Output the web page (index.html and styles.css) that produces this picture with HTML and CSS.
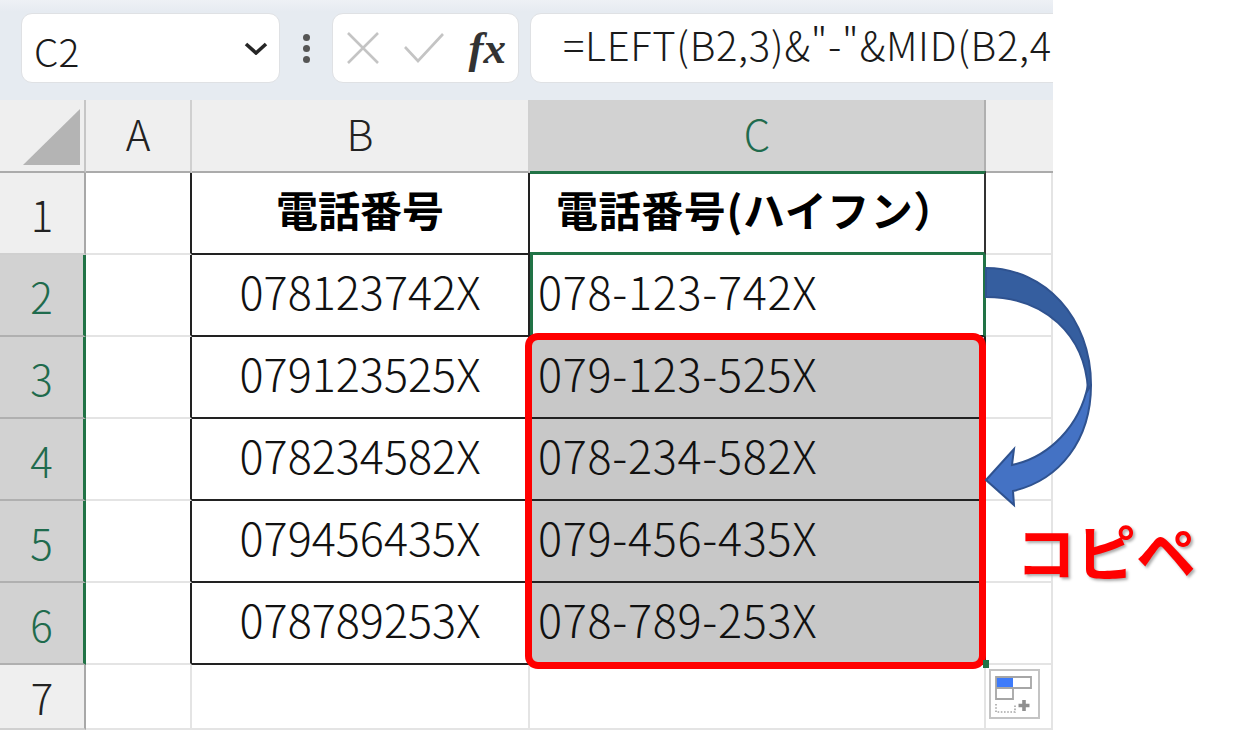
FILE: index.html
```html
<!DOCTYPE html>
<html lang="ja">
<head>
<meta charset="utf-8">
<title>Excel</title>
<link rel="stylesheet" href="styles.css">
</head>
<body>
<div class="stage">
  <div class="sheet">
    <div class="toolbar">
      <div class="box namebox">
        <span>C2</span>
        <svg class="chev" width="24" height="14" viewBox="0 0 24 14"><path d="M2 3l10 9 10-9" fill="none" stroke="#262626" stroke-width="3.6"/></svg>
      </div>
      <div class="dots"><i></i><i></i><i></i></div>
      <div class="box fxbox">
        <svg width="34" height="34" viewBox="0 0 34 34"><path d="M2 2l30 30M32 2L2 32" fill="none" stroke="#c4c4c4" stroke-width="2.6"/></svg>
        <svg width="42" height="32" viewBox="0 0 42 32"><path d="M2 15l13 14L40 2" fill="none" stroke="#c4c4c4" stroke-width="2.6"/></svg>
        <span class="fx">fx</span>
      </div>
      <div class="box formula">=LEFT(B2,3)&amp;"-"&amp;MID(B2,4</div>
    </div>
    <div class="grid">
      <div class="corner"><svg width="86" height="72" viewBox="0 0 86 72"><path d="M80 9v56H23z" fill="#b4b4b4"/></svg></div>
      <div class="ch"><span>A</span></div>
      <div class="ch"><span>B</span></div>
      <div class="ch ch-sel"><span>C</span></div>
      <div class="ch ch-end"></div>

      <div class="rh">1</div>
      <div class="cell before-table"></div>
      <div class="cell tb title">電話番号</div>
      <div class="cell tb title tc c1">電話番号(ハイフン）</div>
      <div class="cell"></div>

      <div class="rh rh-sel">2</div>
      <div class="cell before-table"></div>
      <div class="cell tb num">078123742X</div>
      <div class="cell tb tc val active">078-123-742X</div>
      <div class="cell"></div>

      <div class="rh rh-sel">3</div>
      <div class="cell before-table"></div>
      <div class="cell tb num">079123525X</div>
      <div class="cell tb tc val filled">079-123-525X</div>
      <div class="cell"></div>

      <div class="rh rh-sel">4</div>
      <div class="cell before-table"></div>
      <div class="cell tb num">078234582X</div>
      <div class="cell tb tc val filled">078-234-582X</div>
      <div class="cell"></div>

      <div class="rh rh-sel">5</div>
      <div class="cell before-table"></div>
      <div class="cell tb num">079456435X</div>
      <div class="cell tb tc val filled">079-456-435X</div>
      <div class="cell"></div>

      <div class="rh rh-sel">6</div>
      <div class="cell before-table"></div>
      <div class="cell tb num">078789253X</div>
      <div class="cell tb tc val filled">078-789-253X</div>
      <div class="cell"></div>

      <div class="rh">7</div>
      <div class="cell"></div>
      <div class="cell"></div>
      <div class="cell"></div>
      <div class="cell"></div>
    </div>
  </div>

  <div class="redbox"></div>
  <div class="handle"></div>
  <svg class="arrow" width="110" height="245" viewBox="985 265 110 245">
    <path d="M1091 385C1091 440 1060 480 1013 491l1 14-28-25 28-31-2 16C1050 457 1080 425 1088 385z" fill="#4472c4" stroke="#2f528f" stroke-width="2"/>
    <path d="M986 268C1045 268 1091 318 1091 385l-3 5C1085 335 1045 297 986 297z" fill="#355e9f" stroke="#2f528f" stroke-width="2"/>
  </svg>
  <div class="copy">コピペ</div>
  <div class="paste">
    <svg width="51" height="50" viewBox="0 0 51 50">
      <rect x="7" y="8" width="17" height="11" fill="#3e7bfa"/>
      <path d="M7 8h35v11H7zM7 19h17v11H7z" fill="none" stroke="#a6a6a6" stroke-width="1.8"/>
      <path d="M7 35v8h19v-8" fill="none" stroke="#a6a6a6" stroke-width="1.6" stroke-dasharray="1.6 1.6"/>
      <path d="M35 31v11M29.500 36.500h11" stroke="#8f8f8f" stroke-width="3.6" fill="none"/>
    </svg>
  </div>
</div>
</body>
</html>
```
FILE: styles.css
```css
* { box-sizing: border-box; }
html, body { margin: 0; padding: 0; background: #fff; }
body {
  font-family: "Noto Sans CJK JP", "Noto Sans", sans-serif;
  font-weight: 300;
  color: #1a1a1a;
  overflow: hidden;
}
.stage { position: relative; width: 1240px; height: 730px; overflow: hidden; }
.sheet { width: 1053px; height: 730px; overflow: hidden; }

.toolbar {
  height: 100px;
  display: flex;
  align-items: flex-start;
  padding: 13px 0 0 21px;
  background: linear-gradient(#eef1f5, #e6ebf1 12px);
}
.box {
  height: 70px;
  background: #fff;
  border: 1.5px solid #dfe1e4;
  border-radius: 11px;
  display: flex;
  align-items: center;
  flex: none;
}
.namebox {
  width: 259px;
  justify-content: space-between;
  padding: 0 11px 0 12px;
  font-size: 39px;
}
.namebox span { padding-top: 3px; }
.dots {
  width: 52px;
  height: 70px;
  display: flex;
  flex-direction: column;
  align-items: center;
  justify-content: center;
  gap: 4px;
  flex: none;
}
.dots i { width: 7px; height: 7px; border-radius: 50%; background: #555; }
.fxbox {
  width: 187px;
  padding: 0 12px 0 13px;
  justify-content: space-between;
}
.fx {
  font-family: "Liberation Serif", serif;
  font-style: italic;
  font-weight: 700;
  font-size: 45px;
  color: #333;
  line-height: 1;
}
.formula {
  width: 560px;
  margin-left: 11px;
  padding-left: 32px;
  padding-bottom: 9px;
  font-size: 40px;
  letter-spacing: 0.7px;
  white-space: nowrap;
  overflow: hidden;
}

.grid {
  display: grid;
  grid-template-columns: 86px 106px 338px 456px 67px;
  grid-template-rows: 73px repeat(6, 82px) 65px;
  background: #fff;
}
.corner { background: #efefef; border-right: 2px solid #c6c6c6; border-bottom: 2px solid #ababab; line-height: 0; }
.ch, .rh {
  display: flex;
  align-items: center;
  justify-content: center;
  font-size: 42px;
  background: #efefef;
  color: #222;
}
.ch { border-right: 2px solid #d0d0d0; border-bottom: 2px solid #ababab; padding-bottom: 6px; }
.ch-sel { background: #d2d2d2; color: #1f6b4d; border-right-color: #b0b0b0; }
.ch-end { border-right: 0; }
.rh { border-right: 2px solid #a8a8a8; border-bottom: 2px solid #d0d0d0; }
.rh-sel { background: #d2d2d2; color: #1f6b4d; border-right: 3px solid #217346; border-bottom-color: #b0b0b0; }
.cell {
  border-right: 2px solid #e4e4e4;
  border-bottom: 2px solid #e4e4e4;
  display: flex;
  align-items: center;
  font-size: 45px;
  line-height: 1;
  padding-bottom: 9px;
  white-space: nowrap;
  color: #111;
}
.before-table { border-right-color: #222; }
.tb { border-right-color: #222; border-bottom-color: #222; }
.num { justify-content: center; }
.val { letter-spacing: 0.7px; }
.title { justify-content: center; font-size: 42px; font-weight: 700; color: #000; padding-bottom: 9px; }
.tc { padding-left: 8px; }
.c1 {
  justify-content: flex-start;
  padding-left: 26px;
  letter-spacing: 0.6px;
  border-top: 3px solid #217346;
  border-right-color: #333;
  border-bottom: 3px solid #217346;
  margin-top: -2px;
}
.active { border-right: 3px solid #217346; border-bottom-color: #222; box-shadow: inset 3px 0 0 #217346; }
.filled { background: #c8c8c8; }

.redbox {
  position: absolute;
  left: 525px;
  top: 333px;
  width: 461px;
  height: 336px;
  border: 7px solid #f00;
  border-radius: 13px;
}
.handle { position: absolute; left: 983px; top: 660px; width: 6px; height: 8px; background: #217346; }
.arrow { position: absolute; left: 985px; top: 265px; }
.copy {
  position: absolute;
  left: 1016px;
  top: 510px;
  font-size: 60px;
  line-height: 80px;
  font-weight: 700;
  color: #f00;
  text-shadow: 2px 2px 3px #aaa;
  white-space: nowrap;
}
.paste {
  position: absolute;
  left: 989px;
  top: 669px;
  width: 51px;
  height: 50px;
  border: 2px solid #c4c4c4;
  background: #fff;
  line-height: 0;
}
.paste svg { margin: -2px; }
```
